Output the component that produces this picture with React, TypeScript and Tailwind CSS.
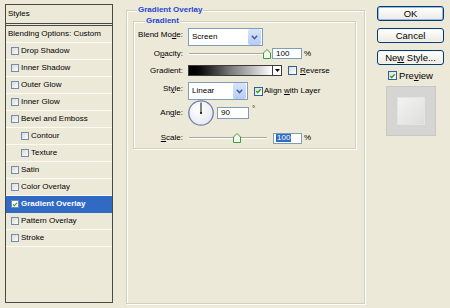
import React from "react";

function GreenCheck({ size = 9 }: { size?: number }) {
  return (
    <svg width={size} height={size} viewBox="0 0 9 9" className="block">
      <path d="M1.6 4.4 L3.5 6.4 L7.4 2.2" fill="none" stroke="#21a121" strokeWidth="1.7" />
    </svg>
  );
}

function ListCheck({ checked }: { checked?: boolean }) {
  return (
    <span
      className={
        "w-[8px] h-[8px] border border-[#6f8cb3] shrink-0 flex items-center justify-center " +
        (checked ? "bg-white" : "bg-gradient-to-br from-[#dcdcd4] to-[#fbfbf8]")
      }
    >
      {checked && <GreenCheck size={7} />}
    </span>
  );
}

function Check({ checked }: { checked?: boolean }) {
  return (
    <span className="w-[9px] h-[9px] border border-[#2f5f95] bg-gradient-to-br from-[#dcdcd4] to-white shrink-0 flex items-center justify-center">
      {checked && <GreenCheck size={8} />}
    </span>
  );
}

function Chevron() {
  return (
    <svg width="7" height="5" viewBox="0 0 7 5" className="block">
      <path d="M0.8 0.8 L3.5 3.6 L6.2 0.8" fill="none" stroke="#4d6185" strokeWidth="1.5" />
    </svg>
  );
}

function Select({ value, w }: { value: string; w: string }) {
  return (
    <div className={"h-[18px] border border-[#7f9db9] bg-white flex items-center shrink-0 " + w}>
      <span className="flex-1 pl-[3px] leading-none">{value}</span>
      <span className="w-[13px] h-[16px] mr-[1px] rounded-[2px] bg-gradient-to-b from-[#d8e4fc] to-[#b6cbf6] flex items-center justify-center">
        <Chevron />
      </span>
    </div>
  );
}

function Slider({ pos }: { pos: string }) {
  return (
    <div className="relative w-[81px] h-full flex items-center shrink-0">
      <div className="w-[78px] ml-[1px] h-[2px] border-t border-[#a9a89c] border-b border-b-white" />
      <svg
        width="8"
        height="10"
        viewBox="0 0 8 10"
        className={"absolute top-1/2 -translate-y-1/2 " + pos}
      >
        <path d="M0.5 4 L4 0.5 L7.5 4 V9.5 H0.5 Z" fill="#f4f8f0" stroke="#3d9a3d" />
      </svg>
    </div>
  );
}

function Label({ children, lift }: { children: React.ReactNode; lift?: boolean }) {
  return (
    <span className={"w-[49px] shrink-0 text-right leading-none " + (lift ? "mb-[4px]" : "")}>
      {children}
    </span>
  );
}

function Button({ children, def }: { children: React.ReactNode; def?: boolean }) {
  return (
    <div
      className={
        "h-[15px] w-full rounded-[3px] border border-[#003c74] bg-gradient-to-b from-white to-[#eceae2] flex items-center justify-center text-[9.5px] leading-none " +
        (def ? "shadow-[inset_0_0_0_1px_#9ab8ec]" : "shadow-[inset_0_0_0_1px_#f4f4f0]")
      }
    >
      {children}
    </div>
  );
}

const items: { label: string; indent?: boolean; selected?: boolean }[] = [
  { label: "Drop Shadow" },
  { label: "Inner Shadow" },
  { label: "Outer Glow" },
  { label: "Inner Glow" },
  { label: "Bevel and Emboss" },
  { label: "Contour", indent: true },
  { label: "Texture", indent: true },
  { label: "Satin" },
  { label: "Color Overlay" },
  { label: "Gradient Overlay", selected: true },
  { label: "Pattern Overlay" },
  { label: "Stroke" },
];

export default function App() {
  return (
    <div className="w-[450px] h-[308px] overflow-hidden bg-[#ece9d8] flex items-start pt-[4px] pl-[5px] font-['Liberation_Sans',Arial,sans-serif] text-[8px] text-black">
      {/* Left styles list */}
      <div className="w-[108px] h-[299px] border border-[#4a4a44] flex flex-col shrink-0">
        <div className="h-[19px] border-b border-[#4a4a44] pl-[2px] flex items-center leading-none">
          Styles
        </div>
        <div className="mt-[1px] h-[18px] border-t border-[#4a4a44] border-b border-b-[#fbfaf4] pl-[2px] flex items-center leading-none">
          Blending Options: Custom
        </div>
        {items.map((it) => (
          <div
            key={it.label}
            className={
              "h-[17px] border-b flex items-center gap-[1px] leading-none " +
              (it.indent ? "pl-[15px] " : "pl-[5px] ") +
              (it.selected
                ? "bg-[#316ac5] border-b-[#316ac5] text-white font-bold"
                : "border-b-[#fbfaf4]")
            }
          >
            <ListCheck checked={it.selected} />
            <span className="ml-[1px]">{it.label}</span>
          </div>
        ))}
      </div>

      {/* Middle group */}
      <fieldset className="ml-[13px] mt-[1px] w-[239px] h-[299px] border border-[#d0d0bf] shadow-[inset_1px_1px_0_#fff,1px_1px_0_#fff] pl-[6px] shrink-0">
        <legend className="ml-[4px] px-[1px] bg-[#ece9d8] text-[#1e46d2] font-bold leading-[10px]">
          Gradient Overlay
        </legend>
        <fieldset className="mt-[1px] w-[223px] border border-[#d0d0bf] shadow-[inset_1px_1px_0_#fff,1px_1px_0_#fff] pb-[5px]">
          <legend className="ml-[11px] px-[1px] bg-[#ece9d8] text-[#1e46d2] font-bold leading-[10px]">
            Gradient
          </legend>
          <div className="flex flex-col">
            {/* Blend mode */}
            <div className="mt-[2px] h-[18px] flex items-center">
              <Label lift>
                Blend Mo<span className="underline">d</span>e:
              </Label>
              <div className="ml-[5px]">
                <Select value="Screen" w="w-[75px]" />
              </div>
            </div>
            {/* Opacity */}
            <div className="mt-[2px] h-[11px] flex items-center">
              <Label>
                O<span className="underline">p</span>acity:
              </Label>
              <div className="ml-[5px] h-full flex items-center">
                <Slider pos="left-[75px]" />
                <div className="ml-[3px] w-[30px] h-[11px] border border-[#7f9db9] bg-white pl-[3px] flex items-center leading-none">
                  100
                </div>
                <span className="ml-[2px] leading-none">%</span>
              </div>
            </div>
            {/* Gradient */}
            <div className="mt-[6px] h-[11px] flex items-center">
              <Label>Gradient:</Label>
              <div className="ml-[5px] h-full flex items-center">
                <div className="w-[85px] h-[11px] border border-[#3c3c3c] bg-gradient-to-r from-black via-[#7a7a7a] to-white" />
                <div className="w-[9px] h-[11px] border border-l-0 border-[#3c3c3c] bg-white flex items-center justify-center">
                  <svg width="5" height="3" viewBox="0 0 5 3" className="block">
                    <path d="M0 0 H5 L2.5 3 Z" fill="#000" />
                  </svg>
                </div>
                <div className="ml-[6px]">
                  <Check />
                </div>
                <span className="ml-[3px] leading-none">
                  <span className="underline">R</span>everse
                </span>
              </div>
            </div>
            {/* Style */}
            <div className="mt-[6px] h-[18px] flex items-center">
              <Label lift>
                St<span className="underline">y</span>le:
              </Label>
              <div className="ml-[5px] flex items-center">
                <Select value="Linear" w="w-[60px]" />
                <div className="ml-[6px]">
                  <Check checked />
                </div>
                <span className="ml-[1px] leading-none">
                  Align <span className="underline">w</span>ith Layer
                </span>
              </div>
            </div>
            {/* Angle */}
            <div className="h-[26px] flex items-center">
              <Label>
                An<span className="underline">g</span>le:
              </Label>
              <div className="ml-[5px] h-full flex items-center">
                <svg width="26" height="26" viewBox="0 0 26 26" className="block shrink-0">
                  <defs>
                    <radialGradient id="dialg" cx="40%" cy="35%" r="70%">
                      <stop offset="0%" stopColor="#ffffff" />
                      <stop offset="100%" stopColor="#e6e8ee" />
                    </radialGradient>
                  </defs>
                  <circle cx="13" cy="13" r="12.2" fill="url(#dialg)" stroke="#6c80aa" strokeWidth="1.3" />
                  <line x1="13" y1="13" x2="13" y2="2.5" stroke="#111" strokeWidth="1" />
                  <circle cx="13" cy="13" r="1.1" fill="#111" />
                </svg>
                <div className="ml-[3px] w-[32px] h-[12px] border border-[#7f9db9] bg-white pl-[3px] flex items-center leading-none">
                  90
                </div>
                <span className="ml-[3px] self-start mt-[5px] leading-none">°</span>
              </div>
            </div>
            {/* Scale */}
            <div className="mt-[7px] h-[10px] flex items-center">
              <Label>
                <span className="underline">S</span>cale:
              </Label>
              <div className="ml-[5px] h-full flex items-center">
                <Slider pos="left-[45px]" />
                <div className="ml-[4px] w-[29px] h-[11px] border border-[#7f9db9] bg-white pl-[2px] flex items-center leading-none">
                  <span className="bg-[#316ac5] text-white px-[1px]">100</span>
                </div>
                <span className="ml-[2px] leading-none">%</span>
              </div>
            </div>
          </div>
        </fieldset>
      </fieldset>

      {/* Right column */}
      <div className="ml-[12px] mt-[2px] w-[67px] flex flex-col shrink-0">
        <Button def>OK</Button>
        <div className="mt-[7px]">
          <Button>Cancel</Button>
        </div>
        <div className="mt-[7px]">
          <Button>
            Ne<span className="underline">w</span>&nbsp;Style...
          </Button>
        </div>
        <div className="mt-[5px] h-[11px] flex items-center justify-center text-[9.5px] leading-none">
          <Check checked />
          <span className="ml-[2px]">
            Pre<span className="underline">v</span>iew
          </span>
        </div>
        <div className="mt-[5px] mx-auto w-[50px] h-[50px] bg-[#d5d5d3] border border-[#c8c8c4] flex items-center justify-center">
          <div className="w-[28px] h-[28px] bg-gradient-to-br from-[#f3f3f2] to-[#dedede] border border-[#e4e4e2]" />
        </div>
      </div>
    </div>
  );
}
